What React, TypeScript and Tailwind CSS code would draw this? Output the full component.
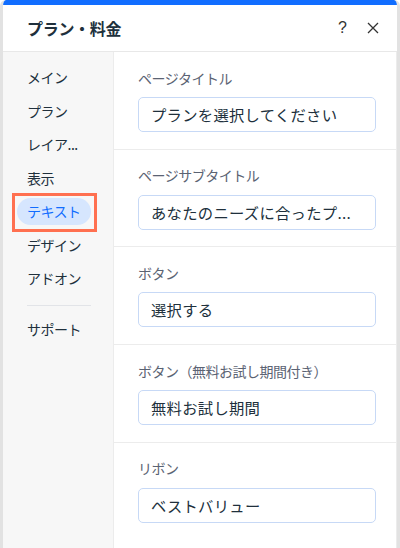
import React from "react";

const font = { fontFamily: '"Noto Sans CJK JP", "Noto Sans", sans-serif' };

const navItems = ["メイン", "プラン", "レイア...", "表示", "テキスト", "デザイン", "アドオン"];

const sections = [
  { label: "ページタイトル", value: "プランを選択してください" },
  { label: "ページサブタイトル", value: "あなたのニーズに合ったプ..." },
  { label: "ボタン", value: "選択する" },
  { label: "ボタン（無料お試し期間付き）", value: "無料お試し期間" },
  { label: "リボン", value: "ベストバリュー" },
];

export default function App() {
  return (
    <div className="w-[400px] h-[548px] bg-white overflow-hidden" style={font}>
      <div className="flex flex-col h-full rounded-t-[6px] overflow-hidden border-x-[3px] border-[#e2e2e2]">
        <div className="h-[5px] bg-[#116dff] shrink-0 -mx-[3px]" />
        <div className="h-[47px] shrink-0 flex items-center pl-[24px] pr-[16px] border-b border-[#e8e8e8] bg-white">
          <div className="text-[16px] font-bold text-[#20303c] tracking-[-0.3px]">プラン・料金</div>
          <div className="ml-auto flex items-center gap-[20px]">
            <span className="text-[16px] text-[#333] leading-none font-light" style={{ fontFamily: '"Liberation Sans", sans-serif' }}>?</span>
            <svg width="12" height="12" viewBox="0 0 12 12" className="mr-[2px]">
              <path d="M1 1 L11 11 M11 1 L1 11" stroke="#333" strokeWidth="1.3" />
            </svg>
          </div>
        </div>
        <div className="flex flex-1 min-h-0">
          <div className="w-[111px] shrink-0 bg-[#f7f7f7] border-r border-[#ececec] pt-[9px]">
            {navItems.map((item) => {
              const selected = item === "テキスト";
              return (
                <div key={item} className="h-[33.5px] flex items-center relative">
                  {selected ? (
                    <>
                      <div className="ml-[14px] w-[74px] h-[27px] rounded-full bg-[#d6e6fe] flex items-center pl-[10px] text-[14px] text-[#116dff] tracking-[-0.5px]">
                        {item}
                      </div>
                      <div className="absolute left-[9px] top-[-2.5px] w-[85px] h-[39px] border-[3px] border-[#ff7050]" />
                    </>
                  ) : (
                    <span className="pl-[24px] text-[14px] text-[#20303c] tracking-[-0.5px]">{item}</span>
                  )}
                </div>
              );
            })}
            <div className="ml-[24px] w-[64px] h-px bg-[#e2e4e8] mt-[9px] mb-[7px]" />
            <div className="h-[33.5px] flex items-center">
              <span className="pl-[24px] text-[14px] text-[#20303c] tracking-[-0.5px]">サポート</span>
            </div>
          </div>
          <div className="flex-1 bg-white border-r border-[#ececec]">
            {sections.map((s, i) => (
              <div
                key={s.label}
                className={
                  i < sections.length - 1
                    ? "pt-[16px] pb-[16.7px] pl-[24px] pr-[20px] border-b border-[#ececec]"
                    : "pt-[16px] pb-[16.7px] pl-[24px] pr-[20px]"
                }
              >
                <div className="h-[20px] flex items-center text-[14px] text-[#5b6373] tracking-[-0.5px]">{s.label}</div>
                <div className="mt-[9px] h-[35px] rounded-[5px] border border-[#c7d9f6] flex items-center pl-[12px] text-[15.3px] text-[#20303c] tracking-[0.3px] whitespace-nowrap overflow-hidden">
                  {s.value}
                </div>
              </div>
            ))}
          </div>
        </div>
      </div>
    </div>
  );
}
